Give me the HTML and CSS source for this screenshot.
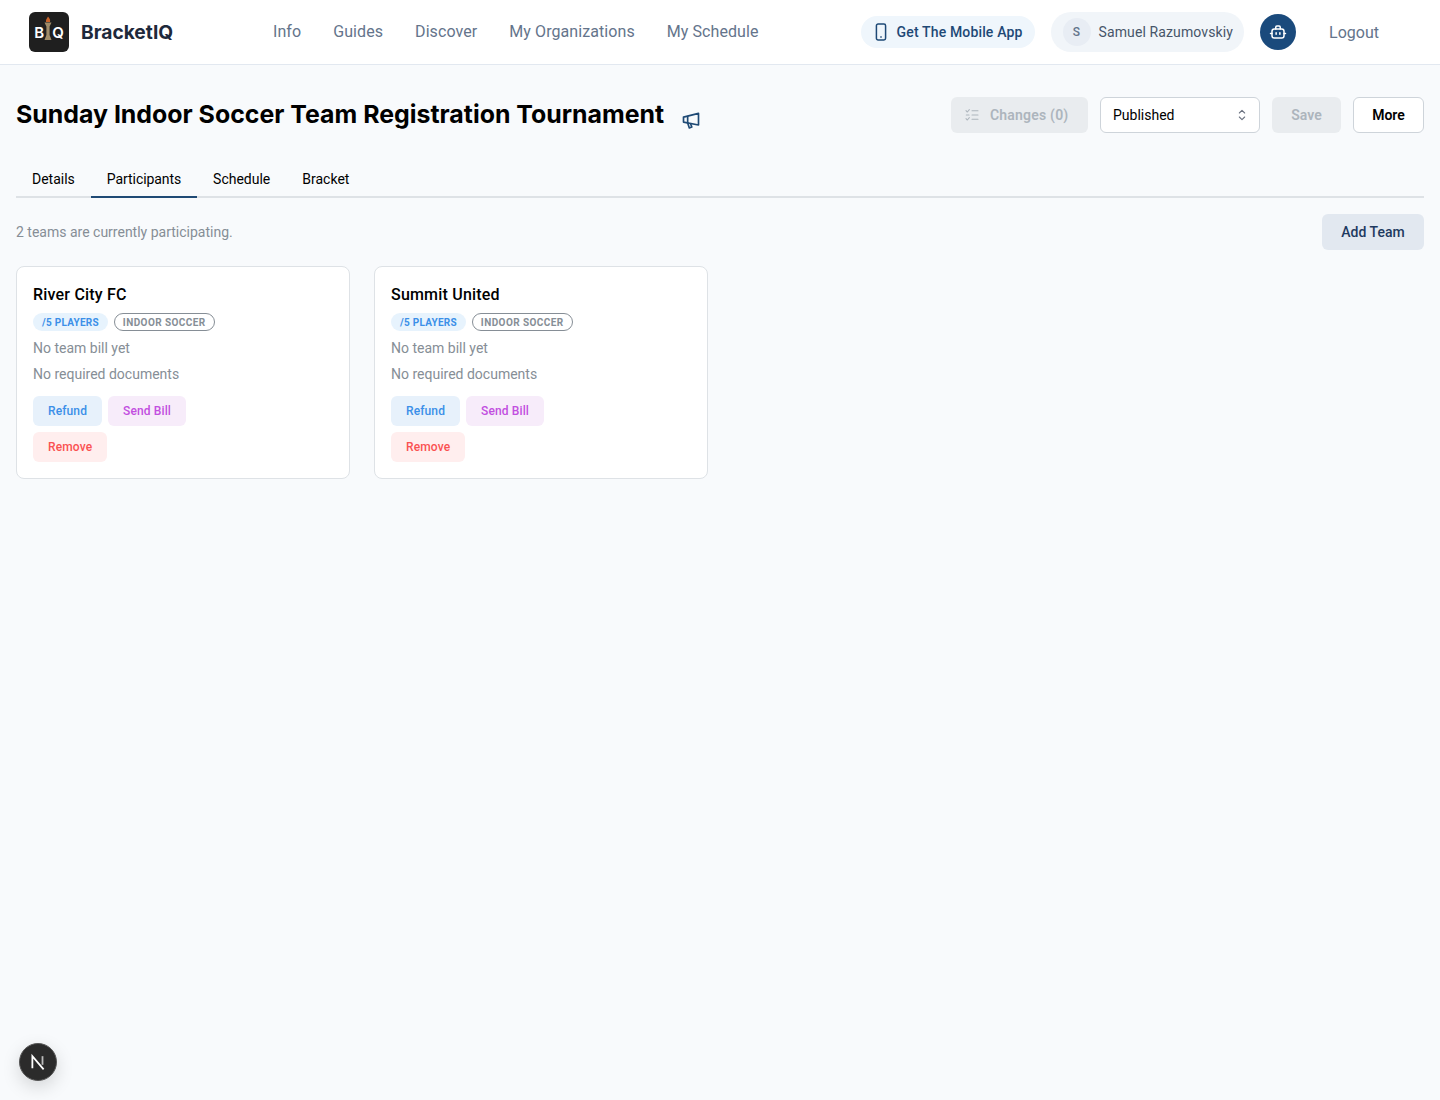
FILE: index.html
```html
<!DOCTYPE html>
<html lang="en">
<head>
    <meta charset="UTF-8">
    <meta name="viewport" content="width=device-width, initial-scale=1.0">
    <title>BracketIQ</title>
    <link rel="stylesheet" href="styles.css">
</head>
<body>
    <header class="navbar">
        <div class="brand">
            <div class="brand-logo">
                <span>B</span>
                <svg class="torch" viewBox="0 0 10 26" width="10" height="26">
                    <path d="M5 0.5C6.8 2.5 7.5 4 7 6H3C2.5 4 3.8 2.5 5 0.5Z" fill="#c8642a"/>
                    <path d="M1.5 6.5H8.5L6.6 10.5V19L8.5 24H1.5L3.4 19V10.5Z" fill="#a08c68"/>
                </svg>
                <span>Q</span>
            </div>
            <span class="brand-name">BracketIQ</span>
        </div>
        <nav class="nav-links">
            <a>Info</a>
            <a>Guides</a>
            <a>Discover</a>
            <a>My Organizations</a>
            <a>My Schedule</a>
        </nav>
        <div class="nav-right">
            <button class="app-pill">
                <svg viewBox="0 0 24 24" width="20" height="20" fill="none" stroke="currentColor" stroke-width="1.8" stroke-linecap="round" stroke-linejoin="round">
                    <rect x="6.5" y="2.5" width="11" height="19" rx="2"/>
                    <path d="M11.8 18h0.4"/>
                </svg>
                Get The Mobile App
            </button>
            <div class="user-pill">
                <span class="avatar">S</span>
                <span>Samuel Razumovskiy</span>
            </div>
            <button class="bot-btn">
                <svg viewBox="0 0 24 24" width="18" height="18" fill="none" stroke="#fff" stroke-width="2" stroke-linecap="round" stroke-linejoin="round">
                    <path d="M9 8V5.5a1.5 1.5 0 0 1 1.5-1.5h3A1.5 1.5 0 0 1 15 5.5V8"/>
                    <rect x="4" y="8" width="16" height="12" rx="3"/>
                    <path d="M2 14h2M20 14h2M9.5 13v2M14.5 13v2"/>
                </svg>
            </button>
            <a class="logout">Logout</a>
        </div>
    </header>

    <main class="page">
        <div class="page-head">
            <div class="title-wrap">
                <h1>Sunday Indoor Soccer Team Registration Tournament</h1>
                <svg class="megaphone" viewBox="0 0 24 24" width="20" height="20" fill="none" stroke="#1f4a75" stroke-width="2" stroke-linecap="round" stroke-linejoin="round">
                    <path d="M3 8.5L21 4V18L3 14.5Z"/>
                    <path d="M8 8V15.5"/>
                    <path d="M8 15.5L10 21.5L13 20.5L11.5 16.5"/>
                </svg>
            </div>
            <div class="head-actions">
                <button class="btn btn-disabled btn-changes">
                    <svg viewBox="0 0 24 24" width="16" height="16" fill="none" stroke="currentColor" stroke-width="1.6" stroke-linecap="round" stroke-linejoin="round">
                        <path d="M3 5.5L5 7.5L8 4M3 17.5L5 19.5L8 16M12 5.5h9M12 12h9M12 18.5h9M3.5 12h4"/>
                    </svg>
                    Changes (0)
                </button>
                <div class="select">
                    <span>Published</span>
                    <svg viewBox="0 0 24 24" width="16" height="16" fill="none" stroke="#6b7280" stroke-width="1.6" stroke-linecap="round" stroke-linejoin="round">
                        <path d="M8 9l4-4 4 4M8 15l4 4 4-4"/>
                    </svg>
                </div>
                <button class="btn btn-disabled btn-save">Save</button>
                <button class="btn btn-more">More</button>
            </div>
        </div>

        <div class="tabs">
            <a class="tab">Details</a>
            <a class="tab active">Participants</a>
            <a class="tab">Schedule</a>
            <a class="tab">Bracket</a>
        </div>

        <div class="summary-row">
            <span class="summary">2 teams are currently participating.</span>
            <button class="btn btn-add">Add Team</button>
        </div>

        <div class="team-grid">
            <div class="team-card">
                <h3>River City FC</h3>
                <div class="badges">
                    <span class="badge badge-blue">/5 Players</span>
                    <span class="badge badge-outline">Indoor Soccer</span>
                </div>
                <p>No team bill yet</p>
                <p>No required documents</p>
                <div class="card-actions">
                    <button class="chip chip-blue">Refund</button>
                    <button class="chip chip-purple">Send Bill</button>
                    <button class="chip chip-red">Remove</button>
                </div>
            </div>
            <div class="team-card">
                <h3>Summit United</h3>
                <div class="badges">
                    <span class="badge badge-blue">/5 Players</span>
                    <span class="badge badge-outline">Indoor Soccer</span>
                </div>
                <p>No team bill yet</p>
                <p>No required documents</p>
                <div class="card-actions">
                    <button class="chip chip-blue">Refund</button>
                    <button class="chip chip-purple">Send Bill</button>
                    <button class="chip chip-red">Remove</button>
                </div>
            </div>
        </div>
    </main>

    <div class="dev-badge">
        <svg viewBox="0 0 16 16" width="18" height="18" fill="none">
            <path d="M3 13.5V2.8L13 14.5" stroke="#fff" stroke-width="1.6"/>
            <path d="M12 2.8V10.5" stroke="#bbb" stroke-width="1.6"/>
        </svg>
    </div>
</body>
</html>
```

FILE: styles.css
```css
* {
    box-sizing: border-box;
}
body {
    margin: 0;
    min-height: 1100px;
    font-family: Roboto, "Liberation Sans", sans-serif;
    font-size: 14px;
    background-color: #f8fafc;
    color: #000;
}
button {
    font-family: inherit;
    border: none;
    cursor: pointer;
}
.navbar {
    display: flex;
    align-items: center;
    height: 65px;
    padding: 0 29px;
    background-color: #fff;
    border-bottom: 1px solid #e2e8f0;
}
.brand {
    display: flex;
    align-items: center;
    gap: 12px;
    width: 244px;
}
.brand-logo {
    display: flex;
    align-items: center;
    justify-content: center;
    width: 40px;
    height: 40px;
    border-radius: 6px;
    background-color: #1f1f1f;
    color: #fff;
    font-family: Inter, sans-serif;
    font-size: 15px;
    font-weight: 600;
}
.torch {
    margin: -6px -1px 0;
}
.brand-name {
    font-family: Inter, sans-serif;
    font-size: 19.2px;
    font-weight: 700;
    color: #1e293b;
}
.nav-links {
    display: flex;
    gap: 32px;
    flex: 1;
    margin-top: -1px;
}
.nav-links a {
    font-size: 16px;
    letter-spacing: 0.08px;
    color: #64748b;
}
.nav-right {
    display: flex;
    align-items: center;
}
.app-pill {
    display: flex;
    align-items: center;
    gap: 6px;
    height: 32px;
    padding: 0 12px 0 10px;
    border-radius: 16px;
    background-color: #eff6fc;
    color: #1e4976;
    font-size: 14px;
    font-weight: 500;
    letter-spacing: 0.15px;
}
.user-pill {
    display: flex;
    align-items: center;
    gap: 8px;
    height: 40px;
    margin-left: 16px;
    padding: 0 11px 0 12px;
    border-radius: 20px;
    background-color: #f1f5f9;
    color: #475569;
    font-size: 14px;
    letter-spacing: 0.12px;
}
.avatar {
    display: flex;
    align-items: center;
    justify-content: center;
    width: 28px;
    height: 28px;
    border-radius: 50%;
    background-color: #e8edf4;
    color: #64748b;
    font-size: 12px;
    font-weight: 500;
}
.bot-btn {
    display: flex;
    align-items: center;
    justify-content: center;
    width: 36px;
    height: 36px;
    margin-left: 16px;
    padding: 0;
    border-radius: 50%;
    background-color: #1a4a7c;
}
.logout {
    margin: 0 32px 0 33px;
    font-size: 16px;
    color: #64748b;
}
.page {
    padding: 32px 16px 0;
}
.page-head {
    display: flex;
    align-items: center;
    justify-content: space-between;
    height: 36px;
}
.title-wrap {
    display: flex;
    align-items: center;
}
h1 {
    margin: -2px 0 0;
    font-family: Inter, sans-serif;
    font-size: 24.9px;
    font-weight: 700;
    line-height: 36px;
}
.megaphone {
    margin: 9px 0 0 17px;
}
.head-actions {
    display: flex;
    align-items: center;
    gap: 12px;
}
.btn {
    height: 36px;
    border-radius: 6px;
    font-size: 14px;
    font-weight: 600;
}
.btn-disabled {
    background-color: #e9ecef;
    color: #adb5bd;
}
.btn-changes {
    display: flex;
    align-items: center;
    gap: 10px;
    width: 137px;
    padding: 0 0 0 13px;
    letter-spacing: 0.2px;
}
.btn-save {
    width: 69px;
}
.btn-more {
    width: 71px;
    background-color: #fff;
    border: 1px solid #ced4da;
    color: #000;
}
.select {
    display: flex;
    align-items: center;
    justify-content: space-between;
    width: 160px;
    height: 36px;
    padding: 0 9px 0 12px;
    border: 1px solid #ced4da;
    border-radius: 6px;
    background-color: #fff;
    font-size: 14px;
}
.tabs {
    display: flex;
    margin-top: 29px;
    border-bottom: 2px solid #dee2e6;
}
.tab {
    height: 36px;
    margin-bottom: -2px;
    padding: 0 16px;
    border-bottom: 2px solid transparent;
    font-size: 14px;
    line-height: 34px;
}
.tab.active {
    border-bottom-color: #1f4a75;
    letter-spacing: -0.08px;
}
.summary-row {
    display: flex;
    align-items: center;
    justify-content: space-between;
    margin-top: 16px;
}
.summary {
    color: #868e96;
    font-size: 14px;
}
.btn-add {
    width: 102px;
    background-color: #e2e8f0;
    color: #1e3a5f;
    font-weight: 500;
}
.team-grid {
    display: grid;
    grid-template-columns: repeat(4, 334px);
    gap: 24px;
    margin-top: 16px;
}
.team-card {
    height: 213px;
    padding: 16px;
    border: 1px solid #dee2e6;
    border-radius: 8px;
    background-color: #fff;
}
.team-card h3 {
    margin: 0;
    font-size: 16px;
    font-weight: 500;
    line-height: 24px;
    letter-spacing: 0.2px;
}
.team-card p {
    margin: 8px 0 0;
    color: #868e96;
    font-size: 14px;
    line-height: 18px;
}
.badges {
    display: flex;
    gap: 6px;
    margin: 6px 0 0;
}
.badge {
    display: flex;
    align-items: center;
    height: 18px;
    padding: 0 9px;
    border-radius: 9px;
    font-size: 10px;
    font-weight: 700;
    letter-spacing: 0.25px;
    text-transform: uppercase;
}
.badge-blue {
    background-color: #e7f3fd;
    color: #3b8fe8;
}
.badge-outline {
    padding: 0 8px;
    border: 1px solid #868e96;
    color: #868e96;
    letter-spacing: 0.42px;
}
.card-actions {
    display: flex;
    flex-wrap: wrap;
    gap: 6px;
    width: 200px;
    margin-top: 13px;
}
.chip {
    height: 30px;
    padding: 0 15px;
    border-radius: 6px;
    font-size: 12px;
    font-weight: 500;
    letter-spacing: 0.12px;
}
.chip-blue {
    background-color: #e7f1fb;
    color: #3b8fe8;
}
.chip-purple {
    background-color: #f7ecfa;
    color: #c24fe0;
}
.chip-red {
    background-color: #ffeeee;
    color: #fa5252;
}
.dev-badge {
    position: fixed;
    left: 19px;
    bottom: 19px;
    display: flex;
    align-items: center;
    justify-content: center;
    width: 38px;
    height: 38px;
    border-radius: 50%;
    background-color: #2b2b2b;
    border: 1px solid #555;
    box-shadow: 0 6px 18px rgba(0, 0, 0, 0.15);
}
```
